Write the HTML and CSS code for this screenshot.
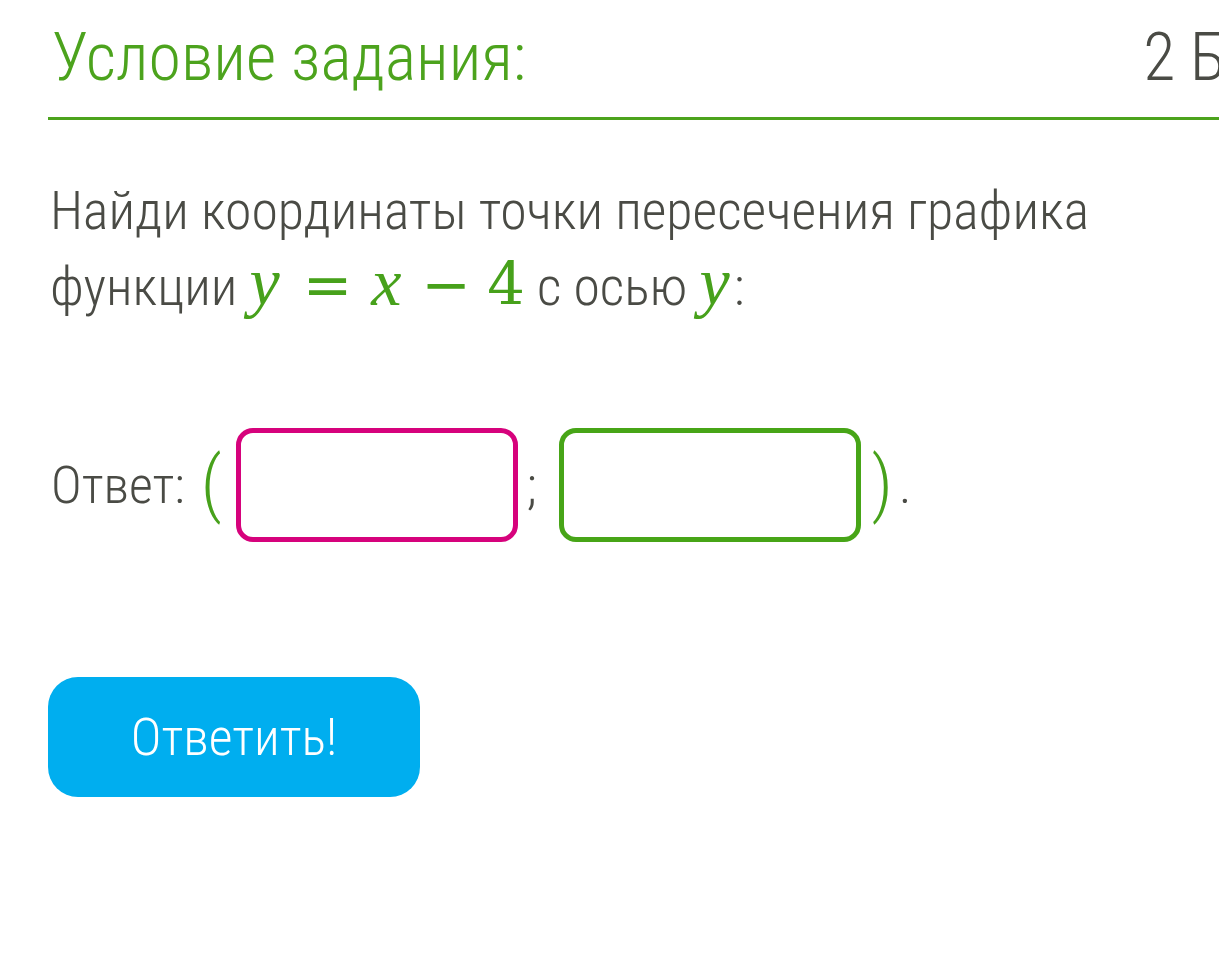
FILE: index.html
```html
<!DOCTYPE html>
<html lang="ru">
<head>
    <meta charset="UTF-8">
    <meta name="viewport" content="width=device-width, initial-scale=1.0">
    <title>Условие задания</title>
    <link rel="stylesheet" href="styles.css">
</head>
<body>
    <div class="task">
        <div class="task-header">
            <h2 class="task-title">Условие задания:</h2>
            <span class="task-points">2 Б.</span>
        </div>

        <p class="task-text">
            Найди координаты точки пересечения графика
            функции <span class="math"><i>y</i><span class="rel">=</span><i>x</i><span class="bin">−</span><span class="num">4</span></span> с осью <span class="math"><i>y</i></span>:
        </p>

        <div class="answer">
            <span class="answer-label">Ответ:</span>
            <span class="paren open">(</span>
            <input type="text" class="answer-box pink">
            <span class="sep">;</span>
            <input type="text" class="answer-box green">
            <span class="paren close">)</span>
            <span class="dot">.</span>
        </div>

        <button class="submit">Ответить!</button>
    </div>
</body>
</html>
```

FILE: styles.css
```css
html {
    overflow-x: hidden;
}
body {
    margin: 0;
    padding: 0 0 0 48px;
    font-family: "Roboto Condensed", Roboto, sans-serif;
    font-stretch: condensed;
    font-weight: 300;
    color: #4a4b45;
    background: #fff;
}
.task {
    width: 1194px;
}
.task-header {
    display: flex;
    justify-content: space-between;
    align-items: baseline;
    padding-top: 18px;
    padding-bottom: 20px;
    border-bottom: 3px solid #4ca31d;
}
.task-title {
    margin: 0 0 0 4px;
    font-size: 66px;
    font-weight: 300;
    line-height: 79px;
    color: #4ca31d;
}
.task-points {
    font-size: 66px;
    line-height: 79px;
}
.task-text {
    margin: 54px 0 0 2px;
    font-size: 53.8px;
    line-height: 74px;
}
.math {
    color: #47a11b;
    font-family: "DejaVu Serif", "Liberation Serif", serif;
    font-stretch: normal;
    font-size: 1.1em;
    font-weight: 400;
    line-height: 1;
}
.math i {
    font-family: "Liberation Serif", serif;
    font-size: 1.15em;
    margin-right: 0.06em;
}
.math .rel {
    margin: 0 0.32em;
}
.math .bin {
    margin: 0 0.27em;
}
.answer {
    display: flex;
    align-items: center;
    margin-top: 104px;
    font-size: 52px;
}
.answer-label {
    margin-left: 3px;
}
.paren {
    color: #47a11b;
    font-size: 72px;
}
.paren.open {
    margin: -4px 14px 0 16px;
}
.paren.close {
    margin: -4px 6px 0 11px;
}
.sep {
    margin: 0 22px 0 9px;
}
.answer-box {
    box-sizing: border-box;
    height: 114px;
    border: 5px solid;
    border-radius: 17px;
    background: #fff;
    outline: none;
}
.answer-box.pink {
    width: 282px;
    border-color: #d6027c;
}
.answer-box.green {
    width: 302px;
    border-color: #47a517;
}
.submit {
    display: block;
    margin-top: 135px;
    width: 372px;
    height: 120px;
    border: none;
    border-radius: 30px;
    background-color: #00aeef;
    color: #fff;
    font-family: inherit;
    font-stretch: condensed;
    font-weight: 300;
    font-size: 52px;
    cursor: pointer;
}
```
